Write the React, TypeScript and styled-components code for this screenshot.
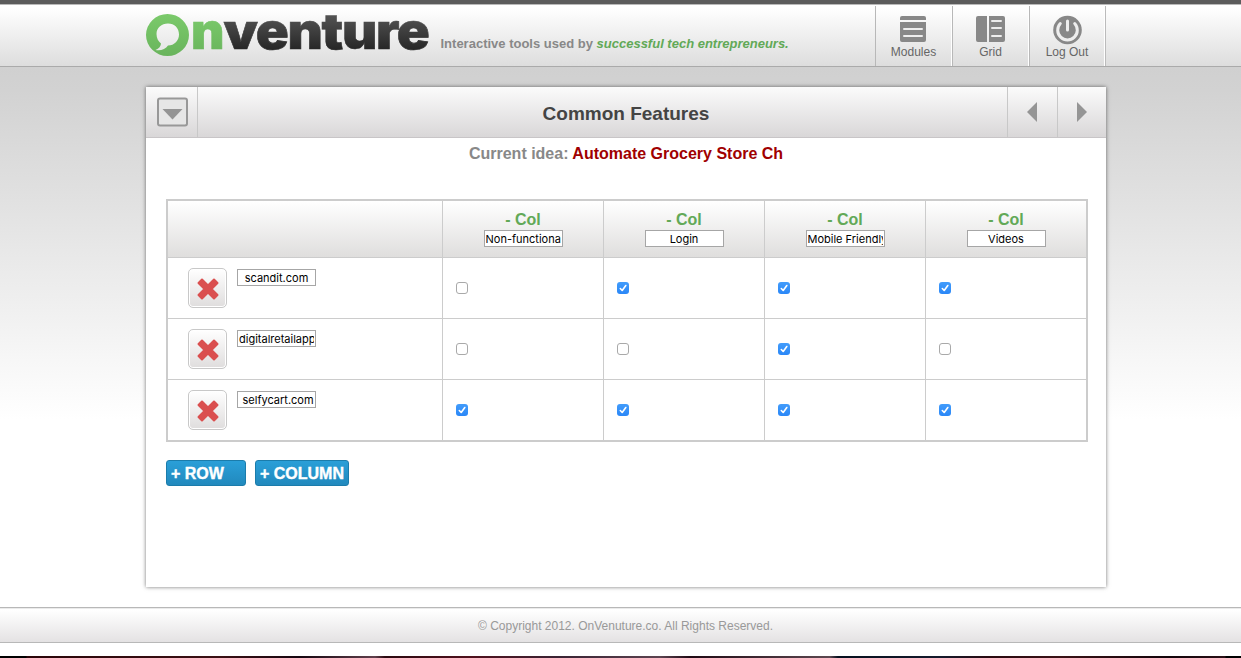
import React, { useState } from "react";
import styled, { createGlobalStyle } from "styled-components";

const GlobalStyle = createGlobalStyle`
  * { box-sizing: border-box; }
  body {
    margin: 0;
    background: #fff;
    font-family: "Liberation Sans", Arial, Helvetica, sans-serif;
  }
`;

const Page = styled.div`
  width: 1241px;
  height: 658px;
  display: flex;
  flex-direction: column;
  overflow: hidden;
  background: linear-gradient(#d0d0d0 67px, #d2d2d2 90px, #ffffff 420px);
`;

const Header = styled.header`
  height: 67px;
  flex: none;
  border-top: 4px solid #5c5c5c;
  border-bottom: 1px solid #aaa;
  box-shadow: inset 0 1px 0 #b9b9b9;
  background: linear-gradient(#fff 4px, #ddd);
`;

const HeaderInner = styled.div`
  width: 960px;
  height: 62px;
  margin-left: 146px;
  padding-top: 2px;
  display: flex;
`;

const LogoSvg = styled.svg`
  flex: none;
  display: block;
  overflow: visible;
`;

const Tagline = styled.p`
  margin: 30px 0 0 10.500px;
  flex: 1;
  font-size: 13px;
  line-height: 15px;
  font-weight: bold;
  color: #888;
  white-space: nowrap;
  em { color: #62a957; }
`;

const Nav = styled.nav`
  display: flex;
  flex: none;
  border-right: 1px solid #bbb;
`;

const NavItem = styled.a<{ $width: number }>`
  width: ${(p) => p.$width}px;
  height: 60px;
  display: flex;
  flex-direction: column;
  align-items: center;
  border-left: 1px solid #b8b8b8;
  box-shadow: inset -1px 0 0 #fff;
  font-size: 12px;
  line-height: 14px;
  color: #666;
  padding: 9px 1px 0 0;
  svg { display: block; margin-bottom: 3px; }
`;

const Panel = styled.main`
  width: 960px;
  height: 500px;
  flex: none;
  margin: 20px 0 0 146px;
  background: #fff;
  box-shadow: 0 0 4px rgba(0, 0, 0, 0.55);
`;

const PanelHeader = styled.div`
  height: 51px;
  display: flex;
  border-bottom: 1px solid #c8c5c7;
  background: linear-gradient(#fbfbfb, #d9d7d8);
`;

const PanelButton = styled.a<{ $width: number; $side: "left" | "right" }>`
  width: ${(p) => p.$width}px;
  display: flex;
  align-items: center;
  justify-content: center;
  padding-${(p) => (p.$side === "left" ? "left" : "right")}: 2px;
  border-${(p) => (p.$side === "left" ? "right" : "left")}: 1px solid #c8c8c8;
`;

const NextButton = styled(PanelButton)`
  padding-right: 0;
  border-left-color: #c8c8c8;
`;

const PanelTitle = styled.h1`
  flex: 1;
  margin: 0;
  padding: 15px 0 0 47px;
  text-align: center;
  font-size: 19px;
  line-height: 23px;
  color: #444;
`;

const IdeaLine = styled.h2`
  margin: 6px 0 0;
  text-align: center;
  font-size: 16px;
  line-height: 19px;
  color: #888;
  span { color: #a00000; }
`;

const Table = styled.div`
  width: 922px;
  margin: 36px 0 0 20px;
  border: 2px solid #ccc;
`;

const Row = styled.div<{ $head?: boolean }>`
  display: grid;
  grid-template-columns: 275px repeat(4, 161px);
  height: ${(p) => (p.$head ? 57 : 61)}px;
  background: ${(p) => (p.$head ? "linear-gradient(#fff, #dfdedd)" : "#fff")};
  border-bottom: 1px solid #ccc;
  &:last-child { border-bottom: 0; height: 60px; }
`;

const Cell = styled.div`
  border-right: 1px solid #ccc;
  &:last-child { border-right-color: transparent; }
`;

const HeadCell = styled(Cell)`
  display: flex;
  flex-direction: column;
  align-items: center;
  padding-top: 9px;
`;

const NameCell = styled(Cell)`
  display: flex;
  align-items: flex-start;
  gap: 10px;
  padding: 10px 0 0 20px;
`;

const CheckCell = styled(Cell)`
  padding: 24px 0 0 13px;
`;

const RemoveColumn = styled.a`
  font-size: 16px;
  line-height: 19px;
  font-weight: bold;
  color: #62a957;
  margin-bottom: 1px;
`;

const NameInput = styled.input`
  width: 79px;
  height: 17px;
  flex: none;
  padding: 1px;
  border: 1px solid #a6a6a6;
  border-radius: 0;
  background: #fff;
  color: #000;
  font: 11px Inter, sans-serif;
  text-align: center;
`;

const RowInput = styled(NameInput)`
  margin-top: 1px;
`;

const DeleteButton = styled.button`
  width: 39px;
  height: 40px;
  padding: 1px 0 0;
  display: flex;
  align-items: center;
  justify-content: center;
  border: 1px solid #c8c8c8;
  border-radius: 5px;
  box-shadow: inset 0 0 0 1px #fff;
  background: linear-gradient(#fff, #dfdddd);
`;

const Box = styled.span<{ $on: boolean }>`
  width: 12px;
  height: 12px;
  display: flex;
  border-radius: 3px;
  border: ${(p) => (p.$on ? "0" : "1px solid #a9a9a9")};
  background: ${(p) => (p.$on ? "linear-gradient(#429cfb, #2a87f7)" : "#fff")};
`;

const Actions = styled.div`
  display: flex;
  gap: 9px;
  margin: 18px 0 0 20px;
`;

const ActionButton = styled.button<{ $width: number }>`
  width: ${(p) => p.$width}px;
  height: 26px;
  padding: 1px 0 0 4px;
  border: 1px solid #1b7cab;
  border-radius: 3px;
  background: linear-gradient(#2a9fd8, #2189bd);
  color: #fff;
  font: bold 16px/23px "Liberation Sans", Arial, sans-serif;
  -webkit-text-stroke: 0.400px #fff;
  text-align: left;
  white-space: nowrap;
`;

const Footer = styled.footer`
  height: 36px;
  flex: none;
  margin-top: 20px;
  border: solid #b8b8b8;
  border-width: 1px 0;
  box-shadow: inset 0 1px 0 #ebebeb;
  background: linear-gradient(#fff 2px, #e4e2e3);
  text-align: center;
  padding: 11px 0 0 10px;
  font-size: 12px;
  line-height: 14px;
  color: #999;
`;

const BottomEdge = styled.div`
  height: 2px;
  flex: none;
  margin-top: 13px;
  background: linear-gradient(90deg, #000 0 26px, #2a0508 27px, #3b1014 220px, #160610 300px, #60404c 375px, #2c0a10 385px, #50101c 470px, #3a2434 560px, #5c4450 660px, #200a14 690px, #5c4850 830px, #06101e 838px, #151a2c 940px, #2a0a10 990px, #3b1216 1060px, #12040a 1170px, #2a1016 1225px, #000 1226px);
`;

function Logo() {
  return (
    <LogoSvg width="284" height="60" viewBox="146 6 284 60">
      <defs>
        <linearGradient id="green" x1="0" y1="14" x2="0" y2="56" gradientUnits="userSpaceOnUse">
          <stop offset="0" stopColor="#7bca6b" />
          <stop offset="1" stopColor="#69b45c" />
        </linearGradient>
        <linearGradient id="dark" x1="0" y1="14" x2="0" y2="50" gradientUnits="userSpaceOnUse">
          <stop offset="0" stopColor="#555" />
          <stop offset="1" stopColor="#262626" />
        </linearGradient>
      </defs>
      <path
        fill="url(#green)"
        fillRule="evenodd"
        d="M167.500 14A21.500 21 0 1 1 167.500 56A21.500 21 0 1 1 167.500 14ZM168 23.500C161.500 23.500 156.500 28 156.500 34C156.500 38.500 158.500 41.500 161 43.500C161 46 159 48.500 155.500 50C160.500 51 165.500 49.500 168 45.500C174.500 45.500 179 40.500 179 34.500C179 28 174.500 23.500 168 23.500Z"
      />
      <g fontFamily="Inter, sans-serif" fontWeight="900" fontSize="50" strokeWidth="0.600">
        <text x="191" y="49" textLength="33.500" lengthAdjust="spacingAndGlyphs" fill="url(#green)" stroke="url(#green)">n</text>
        <text x="223.500" y="49" textLength="205" lengthAdjust="spacingAndGlyphs" letterSpacing="-1.200" fill="url(#dark)" stroke="url(#dark)">venture</text>
      </g>
    </LogoSvg>
  );
}

const ModulesIcon = () => (
  <svg width="27" height="27" viewBox="0 0 27 27">
    <path fill="#888" d="M2 1h22a2 2 0 0 1 2 2v2H0V3a2 2 0 0 1 2-2ZM0 7h26v18a2 2 0 0 1-2 2H2a2 2 0 0 1-2-2Z" />
    <path stroke="#eee" strokeWidth="2" strokeLinecap="round" d="M4 14h18M4 21h18" />
  </svg>
);

const GridIcon = () => (
  <svg width="29" height="27" viewBox="0 0 29 27">
    <path fill="#888" d="M2 1h9v26H2a2 2 0 0 1-2-2V3a2 2 0 0 1 2-2ZM13 1h14a2 2 0 0 1 2 2v22a2 2 0 0 1-2 2H13Z" />
    <path stroke="#eee" strokeWidth="2" strokeLinecap="round" d="M16 6h9M16 13h9M16 21h9" />
  </svg>
);

const PowerIcon = () => (
  <svg width="29" height="27" viewBox="0 0 29 27" overflow="visible">
    <circle cx="14.500" cy="15" r="14.300" fill="#888" />
    <path fill="none" stroke="#eee" strokeWidth="3" strokeLinecap="round" d="M7.300 8.500a9.800 9.800 0 1 0 14.400 0M14.500 6v9" />
  </svg>
);

const MenuIcon = () => (
  <svg width="31" height="30" viewBox="0 0 31 30">
    <rect x="1" y="1.500" width="29" height="27" rx="2" fill="#e6e6e6" stroke="#989898" strokeWidth="2" />
    <path fill="#949494" d="M5.500 12h20l-10 10.500Z" />
  </svg>
);

const Arrow = ({ flip = false }) => (
  <svg width="10" height="20" viewBox="0 0 10 20">
    <path fill="#959595" d={flip ? "M0 0l10 10L0 20Z" : "M10 0L0 10l10 10Z"} />
  </svg>
);

const CrossIcon = () => (
  <svg width="22" height="22" viewBox="0 0 22 22">
    <path
      fill="#da4f4f"
      stroke="#da4f4f"
      strokeWidth="2"
      strokeLinejoin="round"
      d="M5 1.500L11 7.500L17 1.500L20.500 5L14.500 11L20.500 17L17 20.500L11 14.500L5 20.500L1.500 17L7.500 11L1.500 5Z"
    />
  </svg>
);

function Checkbox({ initial }: { initial: boolean }) {
  const [on, setOn] = useState(initial);
  return (
    <Box $on={on} role="checkbox" aria-checked={on} onClick={() => setOn(!on)}>
      {on && (
        <svg width="12" height="12" viewBox="0 0 12 12">
          <path fill="none" stroke="#fff" strokeWidth="1.600" strokeLinecap="round" strokeLinejoin="round" d="M3.300 6.500l1.900 2L8.800 3.500" />
        </svg>
      )}
    </Box>
  );
}

const columns = ["Non-functional", "Login", "Mobile Friendly", "Videos"];
const rows = [
  { name: "scandit.com", checks: [false, true, true, true] },
  { name: "digitalretailapps", checks: [false, false, true, false] },
  { name: " selfycart.com", checks: [true, true, true, true] },
];

export default function App() {
  return (
    <Page>
      <GlobalStyle />
      <Header>
        <HeaderInner>
          <Logo />
          <Tagline>
            Interactive tools used by <em>successful tech entrepreneurs.</em>
          </Tagline>
          <Nav>
            <NavItem $width={77}><ModulesIcon />Modules</NavItem>
            <NavItem $width={77}><GridIcon />Grid</NavItem>
            <NavItem $width={76}><PowerIcon />Log Out</NavItem>
          </Nav>
        </HeaderInner>
      </Header>
      <Panel>
        <PanelHeader>
          <PanelButton $width={52} $side="left"><MenuIcon /></PanelButton>
          <PanelTitle>Common Features</PanelTitle>
          <PanelButton $width={50} $side="right"><Arrow /></PanelButton>
          <NextButton $width={49} $side="right"><Arrow flip /></NextButton>
        </PanelHeader>
        <IdeaLine>
          Current idea: <span>Automate Grocery Store Ch</span>
        </IdeaLine>
        <Table>
          <Row $head>
            <Cell />
            {columns.map((name) => (
              <HeadCell key={name}>
                <RemoveColumn>- Col</RemoveColumn>
                <NameInput defaultValue={name} />
              </HeadCell>
            ))}
          </Row>
          {rows.map((row) => (
            <Row key={row.name}>
              <NameCell>
                <DeleteButton aria-label="Delete row"><CrossIcon /></DeleteButton>
                <RowInput defaultValue={row.name} />
              </NameCell>
              {row.checks.map((on, i) => (
                <CheckCell key={i}><Checkbox initial={on} /></CheckCell>
              ))}
            </Row>
          ))}
        </Table>
        <Actions>
          <ActionButton $width={80}>+ ROW</ActionButton>
          <ActionButton $width={94}>+ COLUMN</ActionButton>
        </Actions>
      </Panel>
      <Footer>© Copyright 2012. OnVenuture.co. All Rights Reserved.</Footer>
      <BottomEdge />
    </Page>
  );
}
